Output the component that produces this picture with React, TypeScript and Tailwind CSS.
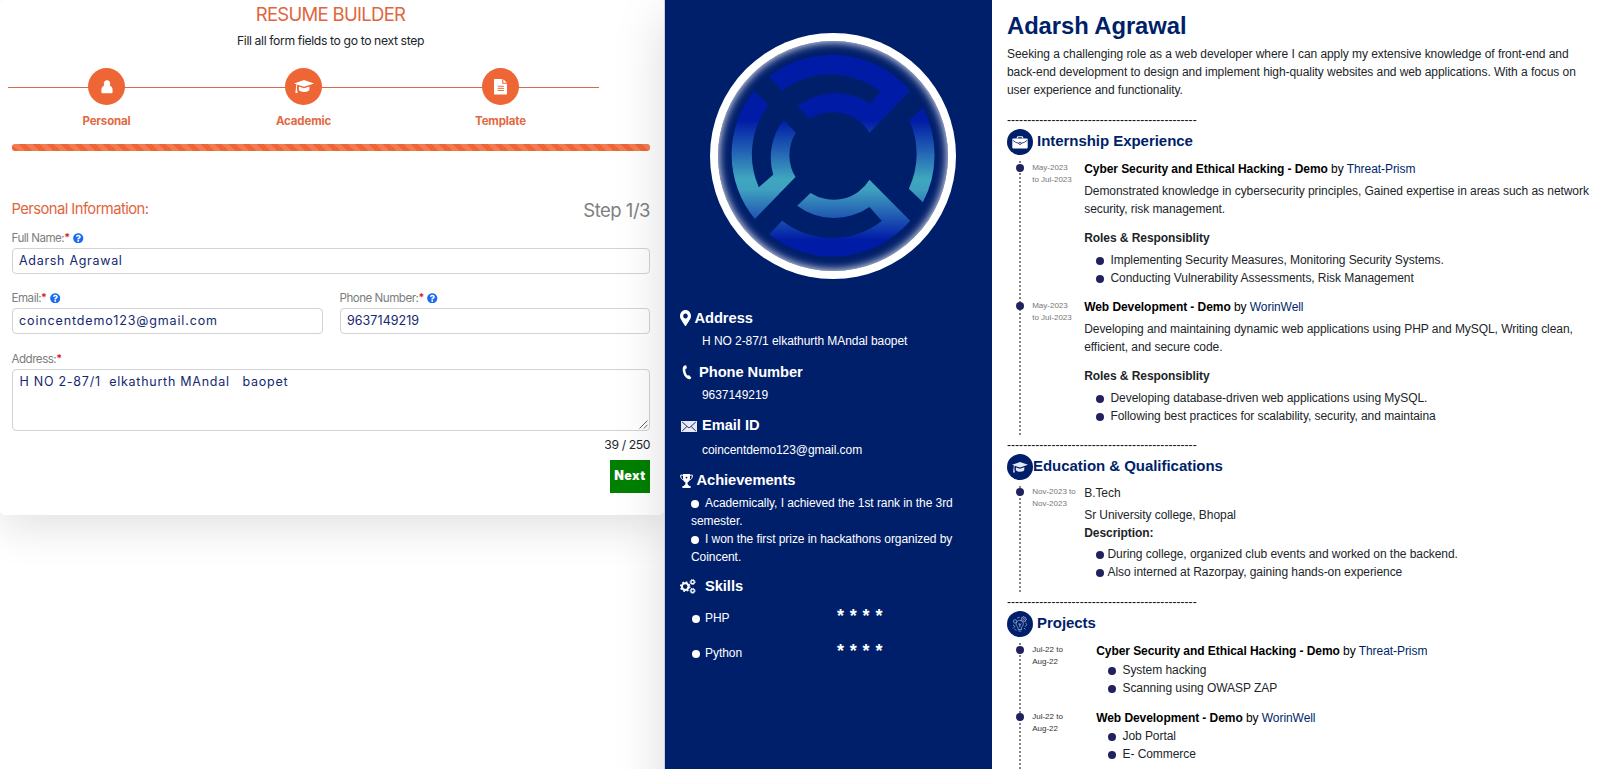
import React from "react";
import { FaMapMarkerAlt, FaQuestionCircle } from "react-icons/fa";

const inter = "font-['Inter','Liberation_Sans',sans-serif]";
const helv = "font-['Liberation_Sans',Arial,sans-serif]";

/* ---------- icons ---------- */

function PersonIcon() {
  return (
    <svg width="12" height="14" viewBox="0 0 12 14" fill="#fff">
      <path d="M6 0.3C8 0.3 9.2 1.6 9.2 3.5C9.2 4.4 9 5 8.8 5.6C10.6 6.3 11.6 8 11.6 10.2V12.2Q11.6 13.3 10.4 13.3H1.6Q0.4 13.3 0.4 12.2V10.2C0.4 8 1.4 6.3 3.2 5.6C3 5 2.8 4.4 2.8 3.5C2.8 1.6 4 0.3 6 0.3Z" />
    </svg>
  );
}

function CapIcon({ className }: { className: string }) {
  return (
    <svg className={className} viewBox="0 0 20 13.5" fill="currentColor">
      <path d="M10 0L20 3.4L10 6.8L3.6 4.7C3 5.4 2.9 6.2 2.9 7.2L3.5 13H1.4L2 7.2C2 6 2.2 5.2 2.6 4.3L0 3.4Z" />
      <path d="M4.9 6.6L10 8.3L15.4 6.5V9.6C15.4 11.2 13 12 10.1 12C7.3 12 4.9 11.2 4.9 9.6Z" />
    </svg>
  );
}

function FileIcon() {
  return (
    <svg width="13" height="16" viewBox="0 0 13 16">
      <path d="M0.5 0H8.2V4.8H13V15.5H0.5Q0 15.5 0 15V0.5Q0 0 0.5 0Z" fill="#fff" />
      <path d="M9.3 0.3L12.8 3.8H9.3Z" fill="#fff" />
      <path d="M3.6 7.3H10M3.6 9.4H10M3.6 11.5H10" stroke="#ee6536" strokeWidth="0.9" />
    </svg>
  );
}

function PhoneIcon() {
  return (
    <svg width="10" height="15" viewBox="0 0 10 15" fill="#fff">
      <path d="M2.6 0.4L4.2 0.2L4.9 3.2L3.4 4C3 6.4 4 9 5.6 10.6L7.2 10.2L9.4 12.8L8.4 14C7.6 14.6 6.4 14.4 5.2 13.6C2.6 11.6 0.9 8.6 0.7 5C0.6 2.6 1.2 0.9 2.6 0.4Z" />
    </svg>
  );
}

function MailIcon() {
  return (
    <svg width="16" height="11" viewBox="0 0 16 11">
      <rect width="16" height="11" fill="#e6e9f4" />
      <path d="M1.2 1L7.2 6.4Q8 7 8.8 6.4L14.8 1M1.2 10L5.8 5.6M14.8 10L10.2 5.6" fill="none" stroke="#1c2c6e" strokeWidth="1" />
    </svg>
  );
}

function TrophyIcon() {
  return (
    <svg width="13" height="14" viewBox="0 0 13 14" fill="#fff">
      <path d="M3 0H10V4.6C10 6.6 8.9 7.8 7.6 8.5V10.2L9.4 12H10.6V14H2.4V12H3.6L5.4 10.2V8.5C4.1 7.8 3 6.6 3 4.6Z" />
      <path d="M3 1.2H0.6C0.6 4 1.6 5.6 3.8 6M10 1.2H12.4C12.4 4 11.4 5.6 9.2 6" fill="none" stroke="#fff" strokeWidth="1" />
      <circle cx="6.5" cy="3.6" r="0.9" fill="#001f6b" />
    </svg>
  );
}

function GearsIcon() {
  return (
    <svg width="16" height="15" viewBox="0 0 16 15" fill="none" stroke="#fff">
      <circle cx="5.2" cy="7.6" r="3.3" strokeWidth="2" />
      <circle cx="5.2" cy="7.6" r="4.6" strokeWidth="1.4" strokeDasharray="1.8 1.81" />
      <circle cx="12.6" cy="3" r="1.7" strokeWidth="1.3" />
      <circle cx="12.6" cy="3" r="2.5" strokeWidth="1" strokeDasharray="1.1 0.86" />
      <circle cx="12.6" cy="11.8" r="1.7" strokeWidth="1.3" />
      <circle cx="12.6" cy="11.8" r="2.5" strokeWidth="1" strokeDasharray="1.1 0.86" />
    </svg>
  );
}

function BriefcaseIcon() {
  return (
    <svg width="16" height="13" viewBox="0 0 16 13">
      <path d="M5.3 2.6V1.6Q5.3 0.7 6.2 0.7H9.8Q10.7 0.7 10.7 1.6V2.6" fill="none" stroke="#fff" strokeWidth="1.1" />
      <rect x="0.3" y="2.4" width="15.4" height="10.2" rx="1" fill="#fff" />
      <path d="M0.6 4.2Q4 7.2 7 7.3M15.4 4.2Q12 7.2 9 7.3" fill="none" stroke="#001f6b" strokeWidth="0.8" />
      <circle cx="8" cy="7.4" r="1.1" fill="#fff" stroke="#001f6b" strokeWidth="0.8" />
    </svg>
  );
}

function IdeaIcon() {
  return (
    <svg width="18" height="18" viewBox="0 0 18 18" fill="none" stroke="#a9b6dc" strokeWidth="0.7">
      <path d="M7 14.5V12.4C5.4 11.2 5 9.8 5.2 8.4C5.6 6.4 7 5.4 8.8 5.4C10.8 5.4 12.3 6.8 12.3 8.8C12.3 10.4 11.4 11.4 10.6 12.3V14.5ZM7.4 16H10.2M8.8 8V12.4M7.3 9L8.8 10.2L10.3 9" />
      <circle cx="12.6" cy="4.4" r="2.4" />
      <circle cx="12.6" cy="4.4" r="0.9" />
      <circle cx="4" cy="6.4" r="1.7" />
      <path d="M2 10L4 11.4L2 13.4M6 3.2L8.6 2.2M14.4 8L16 9.4L14 11.8M13 13L14.4 14.4M3.4 14L5.4 15.4M12.6 1.1V2M15.9 4.4H15M14.9 2.1L14.3 2.7M14.9 6.7L14.3 6.1M10.3 2.1L10.9 2.7" />
    </svg>
  );
}

function Emblem() {
  return (
    <svg className="h-full w-full" viewBox="60 39 737 738">
      <defs>
        <linearGradient id="ring" gradientUnits="userSpaceOnUse" x1="0" y1="300" x2="0" y2="660">
          <stop offset="0" stopColor="#001ba6" />
          <stop offset="0.28" stopColor="#2567b4" />
          <stop offset="0.49" stopColor="#3fa6bf" />
          <stop offset="0.58" stopColor="#3fa0bf" />
          <stop offset="0.78" stopColor="#2461b4" />
          <stop offset="1" stopColor="#001ba6" />
        </linearGradient>
      </defs>
      <g fill="url(#ring)">
        <path d="M237 170A306 306 0 0 1 660 213L538 338A127 127 0 0 0 360 297L321 259A186 186 0 0 1 539 251L571 215A243 243 0 0 0 276 212Z" />
        <path d="M191 212A306 306 0 0 0 194 597L316 471A127 127 0 0 1 317 338L280 300A186 186 0 0 0 249 464L206 502A243 243 0 0 1 235 256Z" />
        <path d="M699 264A306 306 0 0 1 698 547L656 506A243 243 0 0 0 657 300Z" />
        <path d="M276 602A243 243 0 0 0 575 603L538 561A186 186 0 0 1 321 557L361 519A127 127 0 0 0 538 479L660 602A306 306 0 0 1 237 643Z" />
      </g>
    </svg>
  );
}

/* ---------- form ---------- */

function Step({ label, children }: { label: string; children: React.ReactNode }) {
  return (
    <li className="flex w-[197px] flex-col items-center">
      <span className="z-10 flex h-[37px] w-[37px] items-center justify-center rounded-full bg-[#ee6536]">{children}</span>
      <span className="mt-[8px] text-[11.5px] leading-[16px] font-bold tracking-[-0.15px] text-[#e2693f]">{label}</span>
    </li>
  );
}

function Label({ text, help }: { text: string; help?: boolean }) {
  return (
    <label className="flex h-[16px] items-center text-[11.6px] leading-[16px] tracking-[-0.5px] text-[#7d7d7d]">
      {text}
      <span className="text-[10.5px] font-bold text-[#d81e1e]">*</span>
      {help && <FaQuestionCircle className="ml-[3.5px] h-[10.5px] w-[10.5px] text-[#1a6cf0]" />}
    </label>
  );
}

const field =
  "flex h-[26px] w-full items-center rounded-[4px] border border-[#d3d3d3] px-[6.5px] text-[12.5px] text-[#14296f]";

function FormPanel() {
  return (
    <section className={`${inter} h-[515px] w-[664px] shrink-0 rounded-[5px] bg-white shadow-[0_12px_44px_rgba(0,0,0,0.12)]`}>
      <h1 className="pt-[2px] pr-[3px] text-center text-[18.5px] leading-[24px] tracking-[-0.7px] text-[#e0663e]">RESUME BUILDER</h1>
      <p className="mt-[6px] pr-[3px] text-center text-[12.2px] leading-[18px] tracking-[-0.37px] text-[#212529]">
        Fill all form fields to go to next step
      </p>
      <div className="relative mt-[18px] ml-[8px] w-[591px]">
        <div className="absolute top-[19px] h-px w-full bg-[#d9694a]" />
        <ul className="relative flex">
          <Step label="Personal"><PersonIcon /></Step>
          <Step label="Academic"><CapIcon className="h-[13.5px] w-[20px] text-white" /></Step>
          <Step label="Template"><FileIcon /></Step>
        </ul>
      </div>
      <div className="mt-[15px] ml-[12px] h-[7px] w-[638px] rounded-[3px] bg-[#ee6536] bg-[linear-gradient(45deg,rgba(255,255,255,.15)_25%,transparent_25%,transparent_50%,rgba(255,255,255,.15)_50%,rgba(255,255,255,.15)_75%,transparent_75%,transparent)] bg-[length:14px_14px]" />
      <form className="mr-[14px] ml-[11.5px]">
        <div className="mt-[47px] flex h-[26px] justify-between">
          <h2 className="text-[14.8px] leading-[22px] tracking-[-0.58px] text-[#e0663e]">Personal Information:</h2>
          <h2 className="text-[18.5px] leading-[25px] tracking-[-0.5px] text-[#808080]">Step 1/3</h2>
        </div>
        <div className="mt-[6px]"><Label text="Full Name:" help /></div>
        <div className={`${field} mt-[2px] tracking-[0.7px]`}>Adarsh Agrawal</div>
        <div className="mt-[16px] flex gap-[17px]">
          <div className="w-[311px]">
            <Label text="Email:" help />
            <div className={`${field} mt-[2px] pt-px tracking-[0.87px]`}>coincentdemo123@gmail.com</div>
          </div>
          <div className="w-[310.5px]">
            <Label text="Phone Number:" help />
            <div className={`${field} mt-[2px] pt-px tracking-[0.05px]`}>9637149219</div>
          </div>
        </div>
        <div className="mt-[17px]"><Label text="Address:" /></div>
        <div className="relative mt-[2px] h-[62px] rounded-[4px] border border-[#d3d3d3] px-[7px] pt-[3px] text-[12.5px] leading-[18px] tracking-[0.74px] whitespace-pre text-[#14296f]">
          {"H NO 2-87/1  elkathurth MAndal   baopet"}
          <svg className="absolute right-[1px] bottom-[1px]" width="9" height="9" viewBox="0 0 9 9" stroke="#555" strokeWidth="0.9">
            <path d="M0.5 8.5L8.5 0.5M4.8 8.5L8.5 4.8" />
          </svg>
        </div>
        <p className="mt-[5px] text-right text-[12.2px] leading-[18px] tracking-[-0.4px] text-[#212529]">39 / 250</p>
        <button type="button" className="mt-[6px] ml-auto flex h-[33px] w-[40px] items-center justify-center bg-[#008000] text-[12.5px] font-black tracking-[0.4px] text-white">
          Next
        </button>
      </form>
    </section>
  );
}

/* ---------- resume sidebar ---------- */

function SideHeading({ icon, slot, children }: { icon: React.ReactNode; slot: string; children: React.ReactNode }) {
  return (
    <h3 className="flex h-[20px] text-[14.7px] leading-[20px] font-bold">
      <span className={`flex shrink-0 items-center ${slot}`}>{icon}</span>
      {children}
    </h3>
  );
}

function Skill({ name, className }: { name: string; className: string }) {
  return (
    <div className={`flex h-[18px] pl-[12px] ${className}`}>
      <span className="mt-[6px] mr-[5px] h-[8px] w-[8px] shrink-0 rounded-full bg-white" />
      <span className="w-[132px]">{name}</span>
      <span className="-mt-[2px] text-[18px] leading-[18px] font-bold tracking-[0.4px]">* * * *</span>
    </div>
  );
}

function Bullet() {
  return <span className="mr-[6px] inline-block h-[8px] w-[8px] rounded-full bg-white align-[-0.5px]" />;
}

function Sidebar() {
  return (
    <aside className="w-[327px] shrink-0 bg-[#001f6b] pl-[15px] text-[12px] leading-[18px] tracking-[-0.06px] text-white">
      <div className="mt-[33px] ml-[30px] h-[246px] w-[246px] rounded-full bg-white p-[8px]">
        <div className="relative h-[230px] w-[230px] rounded-full bg-[#001f6b] shadow-[inset_0_0_8px_1px_rgba(255,255,255,0.9)]">
          <div className="absolute -inset-[8px]"><Emblem /></div>
        </div>
      </div>
      <div className="mt-[29px]">
        <SideHeading slot="w-[14.5px]" icon={<FaMapMarkerAlt className="h-[16px] w-[11px]" preserveAspectRatio="none" />}>Address</SideHeading>
        <p className="mt-[4px] pl-[22px]">H NO 2-87/1 elkathurth MAndal baopet</p>
      </div>
      <div className="mt-[12px]">
        <SideHeading slot="w-[19px] pl-[2px]" icon={<PhoneIcon />}>Phone Number</SideHeading>
        <p className="mt-[4px] pl-[22px]">9637149219</p>
      </div>
      <div className="mt-[11px]">
        <SideHeading slot="w-[22px] pl-[1px] pt-[2px]" icon={<MailIcon />}>Email ID</SideHeading>
        <p className="mt-[6px] pl-[22px]">coincentdemo123@gmail.com</p>
      </div>
      <div className="mt-[11px]">
        <SideHeading slot="w-[16.5px] pt-[2px]" icon={<TrophyIcon />}>Achievements</SideHeading>
        <p className="mt-[4px] pl-[11px]"><Bullet />Academically, I achieved the 1st rank in the 3rd<br />semester.</p>
        <p className="pl-[11px]"><Bullet />I won the first prize in hackathons organized by<br />Coincent.</p>
      </div>
      <div className="mt-[10px]">
        <SideHeading slot="w-[25px]" icon={<GearsIcon />}>Skills</SideHeading>
        <Skill name="PHP" className="mt-[13px]" />
        <Skill name="Python" className="mt-[17px]" />
      </div>
    </aside>
  );
}

/* ---------- resume body ---------- */

function Divider({ className = "" }: { className?: string }) {
  return (
    <div className={`h-[18px] overflow-hidden leading-[18px] tracking-[0.04px] whitespace-nowrap text-[#111] ${className}`}>
      {"-".repeat(47)}
    </div>
  );
}

function SectionHead({ icon, gap, children }: { icon: React.ReactNode; gap: string; children: React.ReactNode }) {
  return (
    <h2 className={`flex h-[26px] text-[15px] leading-[24px] font-bold tracking-[-0.04px] text-[#001f6b] ${gap}`}>
      <span className="flex h-[26px] w-[26px] shrink-0 items-center justify-center rounded-full bg-[#001f6b]">{icon}</span>
      {children}
    </h2>
  );
}

function Timeline({ className, railTop, children }: { className: string; railTop: string; children: React.ReactNode }) {
  return (
    <div className={`relative ${className}`}>
      <div className={`absolute bottom-0 left-[12px] w-[2px] bg-[repeating-linear-gradient(to_bottom,#85858a_0_2px,transparent_2px_4px)] ${railTop}`} />
      {children}
    </div>
  );
}

function Entry({ date, dark, wide, className = "", children }: { date: [string, string]; dark?: boolean; wide?: boolean; className?: string; children: React.ReactNode }) {
  return (
    <div className={`relative flex ${className}`}>
      <span className="mt-[4px] ml-[9px] h-[8px] w-[8px] shrink-0 rounded-full bg-[#232060]" />
      <p className={`mt-[2px] ml-[8.2px] shrink-0 text-[8px] leading-[12.3px] tracking-normal whitespace-nowrap ${dark ? "text-[#333]" : "text-[#777]"} ${wide ? "w-[64px]" : "w-[52px]"}`}>
        {date[0]}<br />{date[1]}
      </p>
      <div className="min-w-0 flex-1">{children}</div>
    </div>
  );
}

function Title({ role, org }: { role: string; org: string }) {
  return (
    <p className="text-black">
      <b>{role}</b> by <span className="text-[#001f6b]">{org}</span>
    </p>
  );
}

function List({ items, gap = "gap-[6.5px]", className }: { items: string[]; gap?: string; className: string }) {
  return (
    <ul className={`pl-[11.8px] ${className}`}>
      {items.map((item) => (
        <li key={item} className={`flex items-center ${gap}`}>
          <span className="mt-px h-[8px] w-[8px] shrink-0 rounded-full bg-[#232060]" />
          {item}
        </li>
      ))}
    </ul>
  );
}

function ResumeBody() {
  return (
    <main className="flex-1 bg-white pl-[15px] text-[12px] leading-[18px] tracking-[-0.06px] text-[#212529]">
      <h1 className="pt-[8px] text-[23.8px] leading-[36px] font-bold text-[#001f6b]">Adarsh Agrawal</h1>
      <p className="mt-px mb-[11px]">
        Seeking a challenging role as a web developer where I can apply my extensive knowledge of front-end and
        <br />
        back-end development to design and implement high-quality websites and web applications. With a focus on
        <br />
        user experience and functionality.
      </p>
      <Divider className="pt-px" />
      <div className="mt-px">
        <SectionHead gap="gap-[4px]" icon={<BriefcaseIcon />}>Internship Experience</SectionHead>
      </div>
      <Timeline className="mt-[5px] h-[276px]" railTop="top-px">
        <Entry date={["May-2023", "to Jul-2023"]}>
          <Title role="Cyber Security and Ethical Hacking - Demo" org="Threat-Prism" />
          <p className="mt-[4px]">
            Demonstrated knowledge in cybersecurity principles, Gained expertise in areas such as network
            <br />
            security, risk management.
          </p>
          <p className="mt-[11px] font-bold">Roles &amp; Responsiblity</p>
          <List className="mt-[4px]" items={["Implementing Security Measures, Monitoring Security Systems.", "Conducting Vulnerability Assessments, Risk Management"]} />
        </Entry>
        <Entry className="mt-[11px]" date={["May-2023", "to Jul-2023"]}>
          <Title role="Web Development - Demo" org="WorinWell" />
          <p className="mt-[4px]">
            Developing and maintaining dynamic web applications using PHP and MySQL, Writing clean,
            <br />
            efficient, and secure code.
          </p>
          <p className="mt-[11px] font-bold">Roles &amp; Responsiblity</p>
          <List className="mt-[4px]" items={["Developing database-driven web applications using MySQL.", "Following best practices for scalability, security, and maintaina"]} />
        </Entry>
      </Timeline>
      <Divider />
      <SectionHead gap="gap-0" icon={<CapIcon className="h-[11px] w-[16px] text-[#e4e8f4]" />}>Education &amp; Qualifications</SectionHead>
      <Timeline className="mt-[4px] h-[109px]" railTop="top-[2px]">
        <Entry date={["Nov-2023 to", "Nov-2023"]}>
          <p>B.Tech</p>
          <p className="mt-[4px]">Sr University college, Bhopal</p>
          <p className="font-bold">Description:</p>
          <List className="mt-[3px]" gap="gap-[3.5px]" items={["During college, organized club events and worked on the backend.", "Also interned at Razorpay, gaining hands-on experience"]} />
        </Entry>
      </Timeline>
      <Divider />
      <SectionHead gap="gap-[4px]" icon={<IdeaIcon />}>Projects</SectionHead>
      <Timeline className="mt-[5px] h-[140px]" railTop="top-px">
        <Entry dark wide date={["Jul-22 to", "Aug-22"]}>
          <Title role="Cyber Security and Ethical Hacking - Demo" org="Threat-Prism" />
          <List className="mt-px" items={["System hacking", "Scanning using OWASP ZAP"]} />
        </Entry>
        <Entry className="mt-[12px]" dark wide date={["Jul-22 to", "Aug-22"]}>
          <Title role="Web Development - Demo" org="WorinWell" />
          <List className="" items={["Job Portal", "E- Commerce"]} />
        </Entry>
      </Timeline>
    </main>
  );
}

export default function App() {
  return (
    <div className="flex h-[769px] w-[1600px] items-start overflow-hidden bg-white">
      <FormPanel />
      <div className={`${helv} relative flex h-[1000px] w-[936px] shrink-0 border-l border-[#c3cde8] shadow-[0_16px_48px_rgba(0,0,0,0.15)]`}>
        <Sidebar />
        <ResumeBody />
      </div>
    </div>
  );
}
